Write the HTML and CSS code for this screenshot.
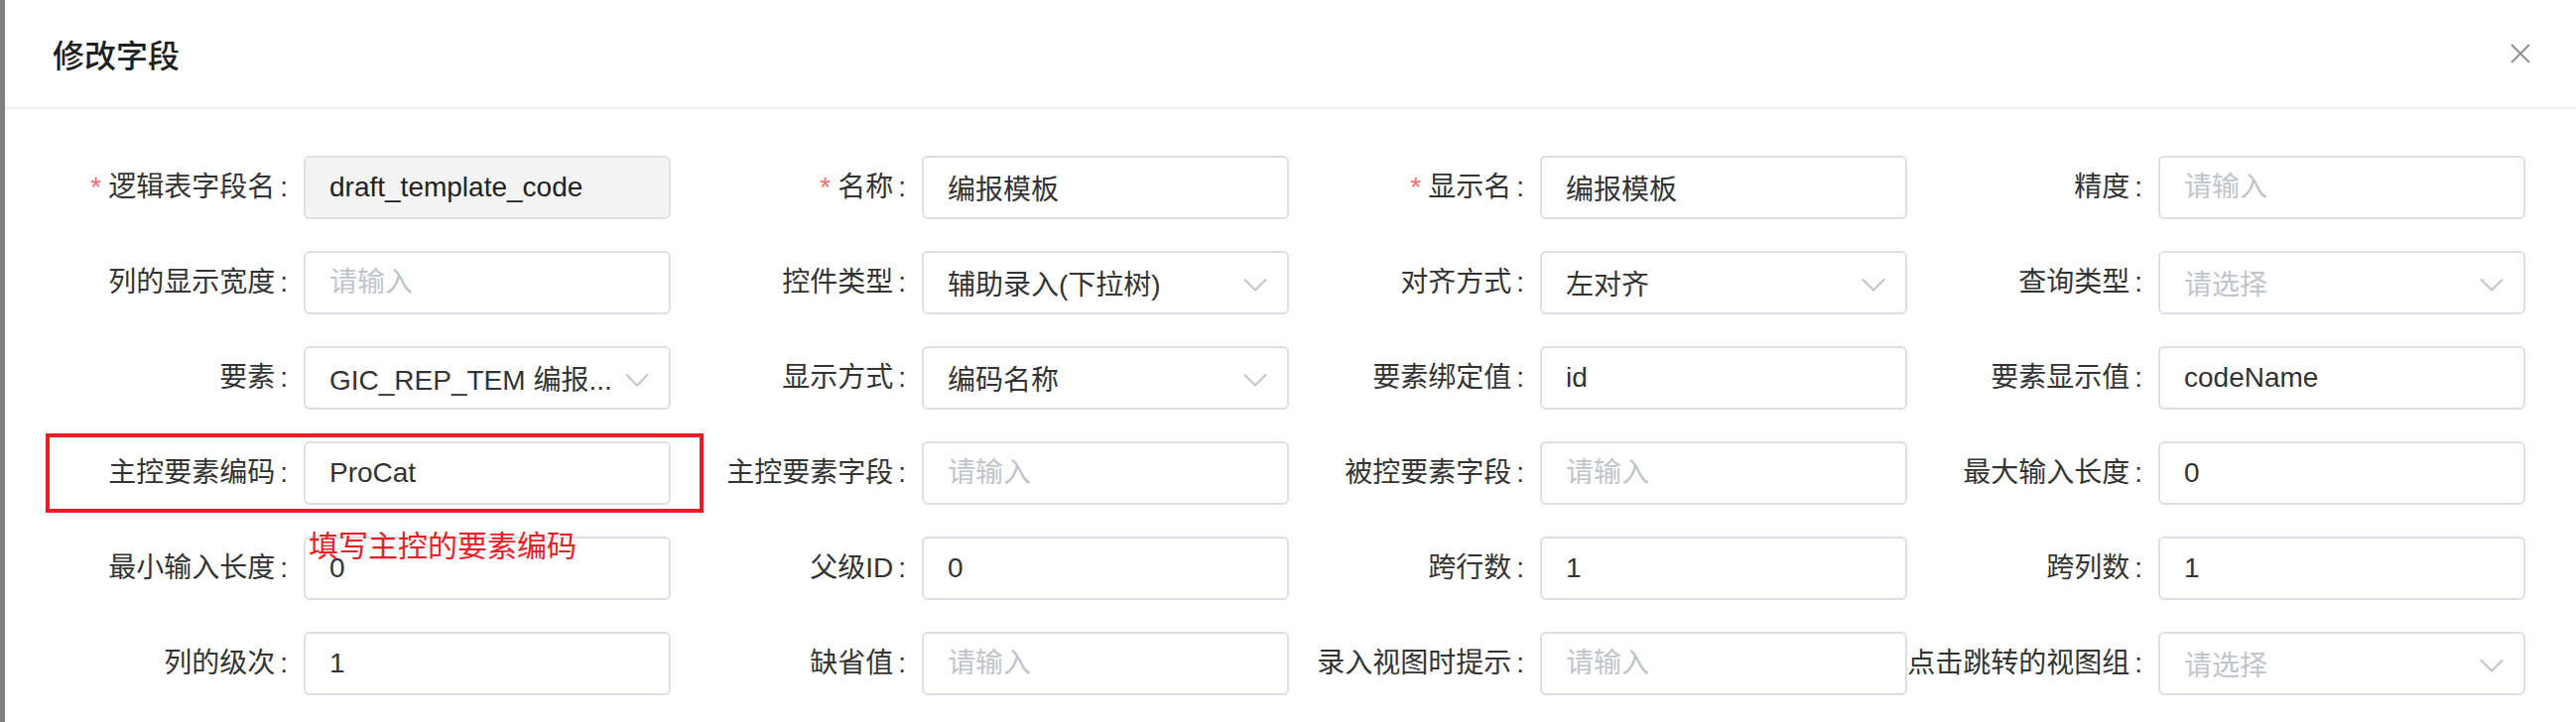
FILE: index.html
```html
<!DOCTYPE html>
<html lang="zh-CN">
<head>
    <meta charset="UTF-8">
    <title>修改字段</title>
    <link rel="stylesheet" href="styles.css">
</head>
<body>
    <div class="dialog">
        <div class="dialog-header">
            <span class="dialog-title">修改字段</span>
            <button class="dialog-close" aria-label="关闭">
                <svg width="22" height="22" viewBox="0 0 22 22"><path d="M2 2 L20 20 M20 2 L2 20" stroke="#909399" stroke-width="2" fill="none"/></svg>
            </button>
        </div>
        <div class="dialog-body">
            <form class="field-form">
                <div class="form-item">
                    <label class="form-label"><span class="required">*</span>逻辑表字段名</label>
                    <input class="form-input" type="text" value="draft_template_code" disabled>
                </div>
                <div class="form-item">
                    <label class="form-label"><span class="required">*</span>名称</label>
                    <input class="form-input" type="text" value="编报模板">
                </div>
                <div class="form-item">
                    <label class="form-label"><span class="required">*</span>显示名</label>
                    <input class="form-input" type="text" value="编报模板">
                </div>
                <div class="form-item">
                    <label class="form-label">精度</label>
                    <input class="form-input" type="text" placeholder="请输入">
                </div>

                <div class="form-item">
                    <label class="form-label">列的显示宽度</label>
                    <input class="form-input" type="text" placeholder="请输入">
                </div>
                <div class="form-item">
                    <label class="form-label">控件类型</label>
                    <div class="form-select"><span>辅助录入(下拉树)</span><svg class="arrow" width="24" height="14" viewBox="0 0 24 14"><polyline points="1,1.5 12,12.5 23,1.5" stroke="#c0c4cc" stroke-width="2" fill="none"/></svg></div>
                </div>
                <div class="form-item">
                    <label class="form-label">对齐方式</label>
                    <div class="form-select"><span>左对齐</span><svg class="arrow" width="24" height="14" viewBox="0 0 24 14"><polyline points="1,1.5 12,12.5 23,1.5" stroke="#c0c4cc" stroke-width="2" fill="none"/></svg></div>
                </div>
                <div class="form-item">
                    <label class="form-label">查询类型</label>
                    <div class="form-select"><span class="placeholder">请选择</span><svg class="arrow" width="24" height="14" viewBox="0 0 24 14"><polyline points="1,1.5 12,12.5 23,1.5" stroke="#c0c4cc" stroke-width="2" fill="none"/></svg></div>
                </div>

                <div class="form-item">
                    <label class="form-label">要素</label>
                    <div class="form-select"><span>GIC_REP_TEM 编报...</span><svg class="arrow" width="24" height="14" viewBox="0 0 24 14"><polyline points="1,1.5 12,12.5 23,1.5" stroke="#c0c4cc" stroke-width="2" fill="none"/></svg></div>
                </div>
                <div class="form-item">
                    <label class="form-label">显示方式</label>
                    <div class="form-select"><span>编码名称</span><svg class="arrow" width="24" height="14" viewBox="0 0 24 14"><polyline points="1,1.5 12,12.5 23,1.5" stroke="#c0c4cc" stroke-width="2" fill="none"/></svg></div>
                </div>
                <div class="form-item">
                    <label class="form-label">要素绑定值</label>
                    <input class="form-input" type="text" value="id">
                </div>
                <div class="form-item">
                    <label class="form-label">要素显示值</label>
                    <input class="form-input" type="text" value="codeName">
                </div>

                <div class="form-item marked">
                    <label class="form-label">主控要素编码</label>
                    <input class="form-input" type="text" value="ProCat">
                    <div class="mark-box"></div>
                    <div class="mark-tip">填写主控的要素编码</div>
                </div>
                <div class="form-item">
                    <label class="form-label">主控要素字段</label>
                    <input class="form-input" type="text" placeholder="请输入">
                </div>
                <div class="form-item">
                    <label class="form-label">被控要素字段</label>
                    <input class="form-input" type="text" placeholder="请输入">
                </div>
                <div class="form-item">
                    <label class="form-label">最大输入长度</label>
                    <input class="form-input" type="text" value="0">
                </div>

                <div class="form-item">
                    <label class="form-label">最小输入长度</label>
                    <input class="form-input" type="text" value="0">
                </div>
                <div class="form-item">
                    <label class="form-label">父级ID</label>
                    <input class="form-input" type="text" value="0">
                </div>
                <div class="form-item">
                    <label class="form-label">跨行数</label>
                    <input class="form-input" type="text" value="1">
                </div>
                <div class="form-item">
                    <label class="form-label">跨列数</label>
                    <input class="form-input" type="text" value="1">
                </div>

                <div class="form-item">
                    <label class="form-label">列的级次</label>
                    <input class="form-input" type="text" value="1">
                </div>
                <div class="form-item">
                    <label class="form-label">缺省值</label>
                    <input class="form-input" type="text" placeholder="请输入">
                </div>
                <div class="form-item">
                    <label class="form-label">录入视图时提示</label>
                    <input class="form-input" type="text" placeholder="请输入">
                </div>
                <div class="form-item">
                    <label class="form-label">点击跳转的视图组</label>
                    <div class="form-select"><span class="placeholder">请选择</span><svg class="arrow" width="24" height="14" viewBox="0 0 24 14"><polyline points="1,1.5 12,12.5 23,1.5" stroke="#c0c4cc" stroke-width="2" fill="none"/></svg></div>
                </div>
            </form>
        </div>
    </div>
</body>
</html>
```

FILE: styles.css
```css
html, body {
    margin: 0;
    height: 100%;
}
body {
    background-color: #808080;
    font-family: "Liberation Sans", "Noto Sans CJK SC", sans-serif;
    overflow: hidden;
}
.dialog {
    margin-left: 5px;
    height: 100%;
    background-color: #fff;
}
.dialog-header {
    display: flex;
    align-items: center;
    justify-content: space-between;
    height: 108px;
    padding: 0 45px 0 48px;
    border-bottom: 2px solid #eeeeee;
}
.dialog-title {
    font-size: 32px;
    font-weight: 500;
    color: #1f1f1f;
}
.dialog-close {
    display: flex;
    padding: 0;
    border: none;
    background: none;
    cursor: pointer;
}
.dialog-body {
    padding: 47px 0 0 48px;
}
.field-form {
    display: grid;
    grid-template-columns: repeat(4, 623px);
    grid-auto-rows: 64px;
    row-gap: 32px;
}
.form-item {
    display: flex;
}
.form-label {
    width: 253px;
    flex-shrink: 0;
    box-sizing: border-box;
    padding-right: 16px;
    text-align: right;
    line-height: 64px;
    font-size: 28px;
    color: #333;
    white-space: nowrap;
}
.form-label::after {
    content: ":";
    margin-left: 5px;
}
.required {
    color: #f56c6c;
    margin-right: 7px;
}
.form-input,
.form-select {
    width: 370px;
    height: 64px;
    box-sizing: border-box;
    margin: 0;
    padding: 0 24px;
    border: 2px solid #dcdfe6;
    border-radius: 6px;
    background-color: #fff;
    font-family: "Liberation Sans", "Noto Sans CJK SC", sans-serif;
    font-size: 28px;
    color: #333;
    outline: none;
}
.form-input::placeholder,
.form-select .placeholder {
    color: #c0c4cc;
}
.form-input:disabled {
    background-color: #f4f4f5;
    border-color: #e0e0e0;
    color: #222;
}
.form-select {
    display: flex;
    align-items: center;
    justify-content: space-between;
    padding-right: 20px;
    white-space: nowrap;
}
.form-select .arrow {
    flex-shrink: 0;
    margin-top: 4px;
}
.marked {
    position: relative;
}
.mark-box {
    position: absolute;
    top: -8px;
    left: -7px;
    right: -33px;
    bottom: -8px;
    border: 4px solid #ec1c24;
}
.mark-tip {
    position: absolute;
    top: 88px;
    left: 258px;
    font-size: 30px;
    line-height: 36px;
    color: #ec1c24;
    white-space: nowrap;
}
```
